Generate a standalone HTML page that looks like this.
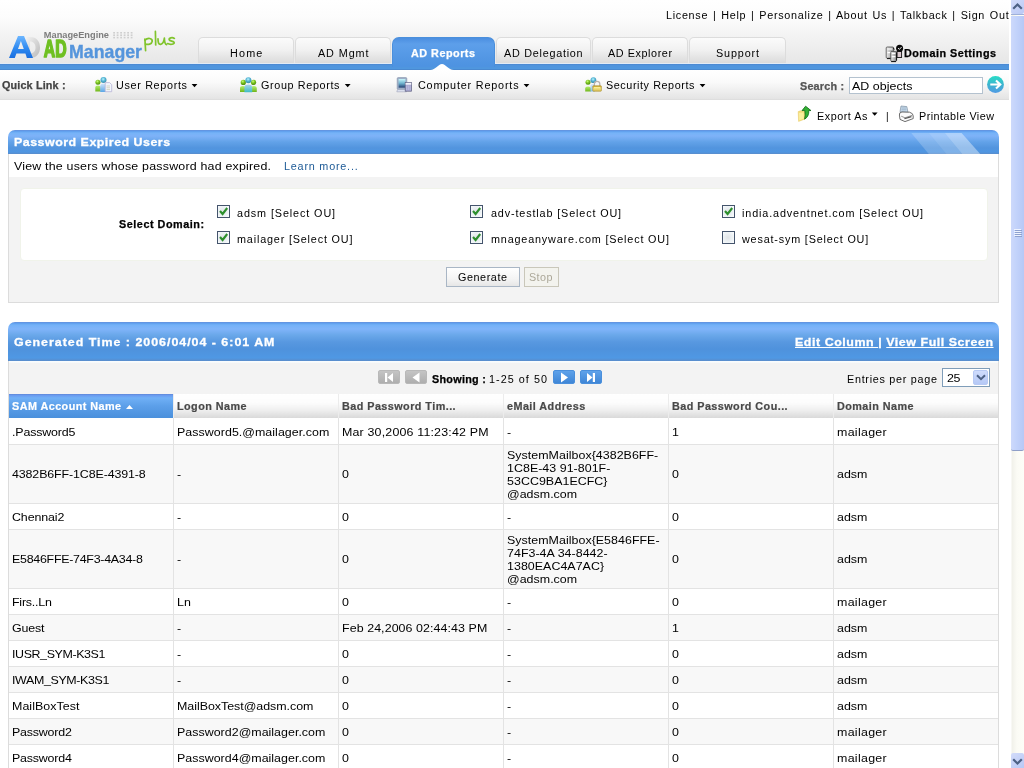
<!DOCTYPE html>
<html>
<head>
<meta charset="utf-8">
<title>ADManager Plus - Password Expired Users</title>
<style>
*{box-sizing:border-box;margin:0;padding:0}
html,body{width:1024px;height:768px;overflow:hidden;background:#fff}
body{font-family:"Liberation Sans",sans-serif;font-size:10px;color:#000;position:relative}
.abs{position:absolute;white-space:nowrap}
#page{will-change:transform;position:absolute;left:0;top:0;width:1009px;height:768px;overflow:hidden;background:#fff}
/* header */
#hdr{position:absolute;left:0;top:0;width:1009px;height:63px;background:linear-gradient(#fff 0,#fcfcfc 18px,#f3f3f3 36px,#e7e7e7 63px)}
#bluebar{position:absolute;left:0;top:64px;width:1009px;height:6px;background:linear-gradient(#4a86cf 0,#4f93dc 1.5px,#4f97df 4.5px,#4682c8 6px)}
#qbar{position:absolute;left:0;top:70px;width:1009px;height:30px;background:linear-gradient(#fff 0,#fafafa 12px,#e4e4e4 29px,#d8d8d8 30px)}
.tab{position:absolute;top:37px;height:26px;border:1px solid #dcdcdc;border-bottom:none;border-radius:5px 5px 0 0;background:linear-gradient(#fbfbfb 0,#f1f1f1 12px,#d9d9d9 26px)}
.tab.sel{background:linear-gradient(#4b8ee0 0,#5d9fea 6px,#4e93e1 27px);border-color:#4a8fdc;height:30px;border-radius:7px 7px 0 0}
.t10{font-size:10px;letter-spacing:.75px}
.t11{font-size:11.5px;letter-spacing:.55px}
.b{font-weight:bold;-webkit-text-stroke:.25px currentColor}
.t11.b{-webkit-text-stroke:.3px #fff}
#grid th{-webkit-text-stroke:.2px currentColor}
.m{display:inline-block;transform:scaleX(1.08);transform-origin:0 50%}
/* panels */
.phead{position:absolute;left:8px;width:991px;border-radius:7px 7px 0 0;background:linear-gradient(#6a8ed8 0,#5c9cec 1px,#76b3f8 3px,#7eb2f8 6px,#62a2e8 12px,#5294de 18px,#4f96e2 22px,#5a8cca 24px)}
.pbody{position:absolute;left:8px;width:991px;border:1px solid #dcdcdc;border-top:none;background:#f3f3f3}
.cb{position:absolute;width:13px;height:13px;border:1px solid #44546c;background:radial-gradient(circle at 45% 50%,#dfe3e6 0,#eef3f6 60%,#fdfefe 100%)}
.btn{position:absolute;height:20px;border:1px solid #a9b6c5;background:linear-gradient(#fff,#f4f4f4 60%,#e6e6e6);text-align:center}
.pg{width:22px;height:14px;border-radius:2px;background:linear-gradient(#5fa2ea,#3f86d6);border:1px solid #4a8fdc}
.pg.g{background:linear-gradient(#c4c4c4,#aeaeae);border-color:#b8b8b8}
/* table */
#grid{position:absolute;left:8px;top:394px;width:991px;border-collapse:collapse;table-layout:fixed}
#grid th{height:24px;text-align:left;font-size:10px;letter-spacing:.42px;color:#484848;padding:0 0 0 4px;background:linear-gradient(#fff 0,#fcfcfc 9px,#efefef 16px,#d9d9d9 24px);border-left:1px solid #ececec;white-space:nowrap;overflow:hidden}
#grid th.s{color:#fff;background:linear-gradient(#5f86d6 0,#6a9cf0 1.5px,#70b0f6 4px,#5c9fe9 12px,#4a90dc 24px);border-left:none}
#grid td{height:26px;font-size:11.5px;letter-spacing:.03px;line-height:13px;padding:4px 0 2px 4px;border-left:1px solid #e3e3e3;border-bottom:1px solid #e3e3e3;vertical-align:middle;background:#fff}
#grid tr.a td{background:#f8f8f8}
#grid tr.r1 td{padding-top:6px}
#grid td:first-child,#grid th:first-child{border-left:none}
#grid td+td,#grid th+th{padding-left:3px}
</style>
</head>
<body>
<div id="page">
<div id="hdr"></div>
<div class="abs" style="left:0;top:63px;width:1009px;height:1px;background:#e2ebf5"></div>
<div id="bluebar"></div>
<div id="qbar"></div>

<!-- top links -->
<span class="abs t10 m" id="toplinks" style="left:666.2px;top:9px;line-height:13px;word-spacing:1px;letter-spacing:0.65px">License | Help | Personalize | About Us | Talkback | Sign Out</span>

<!-- logo -->
<svg class="abs" style="left:6px;top:28px" width="172" height="36" viewBox="0 0 172 36">
  <defs>
    <linearGradient id="lgA" x1="0" y1="0" x2="0" y2="1"><stop offset="0" stop-color="#6db6ff"/><stop offset=".55" stop-color="#2f8af0"/><stop offset="1" stop-color="#1a6fe0"/></linearGradient>
    <linearGradient id="lgD" x1="0" y1="0" x2="1" y2="1"><stop offset="0" stop-color="#f2f2f2"/><stop offset="1" stop-color="#b9b9b9"/></linearGradient>
  </defs>
  <!-- D (gray) -->
  <path d="M20 9 H24 C31 9 34 14 34 19.5 C34 25 31 30 24 30 H20 Z M24 13.5 V25.5 C27.5 25.5 29.5 23 29.5 19.5 C29.5 16 27.5 13.5 24 13.5 Z" fill="url(#lgD)" fill-rule="evenodd"/>
  <!-- A (blue) -->
  <path d="M3 30 L12 8 H18 L27 30 H21 L19.4 25.5 H10.4 L8.8 30 Z M12 21 H17.8 L14.9 13 Z" fill="url(#lgA)" fill-rule="evenodd"/>
  <text x="37.8" y="10.2" font-family="Liberation Sans, sans-serif" font-weight="bold" font-size="9.2" fill="#7d7d7d" textLength="65.2" lengthAdjust="spacingAndGlyphs">ManageEngine</text>
  <g fill="#cfcfcf"><rect x="107.2" y="4" width="1.8" height="1.6"/><rect x="107.2" y="6.4" width="1.8" height="1.6"/><rect x="107.2" y="8.8" width="1.8" height="1.6"/><rect x="110.7" y="4" width="1.8" height="1.6"/><rect x="110.7" y="6.4" width="1.8" height="1.6"/><rect x="110.7" y="8.8" width="1.8" height="1.6"/><rect x="114.2" y="4" width="1.8" height="1.6"/><rect x="114.2" y="6.4" width="1.8" height="1.6"/><rect x="114.2" y="8.8" width="1.8" height="1.6"/><rect x="117.7" y="4" width="1.8" height="1.6"/><rect x="117.7" y="6.4" width="1.8" height="1.6"/><rect x="117.7" y="8.8" width="1.8" height="1.6"/><rect x="121.2" y="4" width="1.8" height="1.6"/><rect x="121.2" y="6.4" width="1.8" height="1.6"/><rect x="121.2" y="8.8" width="1.8" height="1.6"/><rect x="124.7" y="4" width="1.8" height="1.6"/><rect x="124.7" y="6.4" width="1.8" height="1.6"/><rect x="124.7" y="8.8" width="1.8" height="1.6"/></g>
  <text x="37.8" y="29.3" font-family="Liberation Sans, sans-serif" font-weight="bold" font-size="23.6" fill="#6fc022" stroke="#6fc022" stroke-width="1.7" stroke-linejoin="round" textLength="22.8" lengthAdjust="spacingAndGlyphs">AD</text>
  <text x="63.1" y="29.9" font-family="Liberation Sans, sans-serif" font-weight="bold" font-size="17.8" fill="#5595dc" stroke="#5595dc" stroke-width=".35" textLength="72.9" lengthAdjust="spacingAndGlyphs">Manager</text>
  <g fill="none" stroke="#80c42c" stroke-width="1.7" stroke-linecap="round" stroke-linejoin="round">
    <path d="M138.9 11 L139.6 22.6"/><path d="M139 12.2 C141.6 9.4 146.6 10 146.2 13.4 C145.8 16.2 142 17 139.5 16"/>
    <path d="M149.4 3.4 L149.7 17"/>
    <path d="M152 10.8 C152 14 152.4 16.6 154.6 16.4 C156.8 16.2 158 13 158.4 10.2 C158.4 13 158.8 16 160.6 16.6"/>
    <path d="M168.4 10.4 C166 9 162.8 10 163.2 11.8 C163.6 13.6 167.8 12.8 168.2 14.6 C168.5 16.2 164.4 17 161.6 15.6"/>
  </g>
</svg>

<!-- tabs -->
<div class="tab" style="left:198px;width:96px"></div>
<div class="tab" style="left:295px;width:96px"></div>
<div class="tab sel" style="left:392px;width:103px"></div>
<div class="tab" style="left:496px;width:95px"></div>
<div class="tab" style="left:592px;width:96px"></div>
<div class="tab" style="left:689px;width:97px"></div>
<svg class="abs" style="left:430px;top:63px" width="24" height="7" viewBox="0 0 24 7"><path d="M0 7 C6 7 8 1 12 1 C16 1 18 7 24 7 Z" fill="#fff"/></svg>
<span class="abs t10 m" style="left:230px;top:47px;line-height:13px;letter-spacing:1.1px">Home</span>
<span class="abs t10 m" style="left:317.7px;top:47px;line-height:13px;letter-spacing:0.85px">AD Mgmt</span>
<span class="abs t10 b m" style="left:410.7px;top:47px;line-height:13px;color:#fff;letter-spacing:0.47px">AD Reports</span>
<span class="abs t10 m" style="left:503.7px;top:47px;line-height:13px;letter-spacing:0.69px">AD Delegation</span>
<span class="abs t10 m" style="left:607.7px;top:47px;line-height:13px;letter-spacing:0.54px">AD Explorer</span>
<span class="abs t10 m" style="left:716.2px;top:47px;line-height:13px;letter-spacing:0.8px">Support</span>
<span class="abs t10 b m" style="left:903.7px;top:47px;line-height:13px;letter-spacing:0.45px">Domain Settings</span>

<!-- quick links -->
<span class="abs t10 b m" style="left:1.7px;top:79px;line-height:13px;color:#444;letter-spacing:0.14px">Quick Link :</span>
<span class="abs t10 m" style="left:116.2px;top:79px;line-height:13px;letter-spacing:0.62px">User Reports</span>
<span class="abs t10 m" style="left:261.2px;top:79px;line-height:13px;letter-spacing:0.59px">Group Reports</span>
<span class="abs t10 m" style="left:418.2px;top:79px;line-height:13px;letter-spacing:0.76px">Computer Reports</span>
<span class="abs t10 m" style="left:606.2px;top:79px;line-height:13px;letter-spacing:0.53px">Security Reports</span>
<span class="abs t10 b m" style="left:799.7px;top:80px;line-height:13px;color:#555;letter-spacing:0.18px">Search :</span>
<div class="abs" style="left:849px;top:77px;width:134px;height:17px;border:1px solid #b4c2cf;background:#fff"></div>
<span class="abs t11 m" style="left:851.7px;top:80px;line-height:13px;letter-spacing:0.05px">AD objects</span>

<!-- export row -->
<span class="abs t10 m" style="left:816.7px;top:110px;line-height:13px;letter-spacing:0.49px">Export As</span>
<span class="abs t10" style="left:886px;top:110px;line-height:13px">|</span>
<span class="abs t10 m" style="left:918.7px;top:110px;line-height:13px;letter-spacing:0.44px">Printable View</span>

<!-- icons -->
<svg class="abs" style="left:0;top:0" width="1009" height="130" viewBox="0 0 1009 130">
<defs>
  <radialGradient id="gG" cx=".4" cy=".3" r=".7"><stop offset="0" stop-color="#c6ff7a"/><stop offset=".5" stop-color="#78bf1c"/><stop offset="1" stop-color="#4f8f0e"/></radialGradient>
  <radialGradient id="gT" cx=".45" cy=".35" r=".7"><stop offset="0" stop-color="#b8f4ff"/><stop offset=".5" stop-color="#4fb0d0"/><stop offset="1" stop-color="#3a8aa6"/></radialGradient>
  <linearGradient id="gGb" x1="0" y1="0" x2="0" y2="1"><stop offset="0" stop-color="#b6f070"/><stop offset="1" stop-color="#6fb51a"/></linearGradient>
  <linearGradient id="gBb" x1="0" y1="0" x2="0" y2="1"><stop offset="0" stop-color="#cfe6fb"/><stop offset="1" stop-color="#5aa6e6"/></linearGradient>
  <linearGradient id="gTb" x1="0" y1="0" x2="0" y2="1"><stop offset="0" stop-color="#a9d4ee"/><stop offset="1" stop-color="#3dbcc4"/></linearGradient>
  <linearGradient id="gScr" x1="0" y1="0" x2="0" y2="1"><stop offset="0" stop-color="#c8f6fb"/><stop offset=".5" stop-color="#6fb4cf"/><stop offset="1" stop-color="#253f72"/></linearGradient>
  <linearGradient id="gGo" x1="0" y1="0" x2="0" y2="1"><stop offset="0" stop-color="#27dcc6"/><stop offset=".5" stop-color="#3db4cf"/><stop offset="1" stop-color="#519be4"/></linearGradient>
  <linearGradient id="gLk" x1="0" y1="0" x2="0" y2="1"><stop offset="0" stop-color="#c8a527"/><stop offset=".45" stop-color="#f1df7a"/><stop offset="1" stop-color="#d9c25a"/></linearGradient>
  <linearGradient id="gSv" x1="0" y1="0" x2="1" y2="0"><stop offset="0" stop-color="#ececec"/><stop offset="1" stop-color="#8e8e8e"/></linearGradient>
</defs>
<!-- user reports -->
<g>
  <path d="M95.3 91.6 V87.6 Q95.3 85.4 98 85.4 Q100.7 85.4 100.7 87.6 V91.6 Z" fill="url(#gGb)"/>
  <circle cx="97.9" cy="82.3" r="2.5" fill="url(#gG)"/>
  <path d="M100.2 92 V86.6 Q100.2 83.6 103.2 83.6 Q106 83.6 106 86.6 V92 Z" fill="url(#gBb)"/>
  <circle cx="103.5" cy="80.1" r="3" fill="url(#gT)"/>
  <path d="M105.2 82.6 H109.6 L111.7 84.7 V91.7 H105.2 Z" fill="#f1f6fc" stroke="#b7b2d6" stroke-width=".8"/>
  <path d="M106.5 86 H110 M106.5 87.8 H110 M106.5 89.6 H110" stroke="#c9c4a8" stroke-width=".7"/>
</g>
<!-- group reports -->
<g>
  <path d="M240 92 V88.4 Q240 86 243 86 Q245.8 86 245.8 88.4 V92 Z" fill="url(#gGb)"/>
  <path d="M251 92 V88.4 Q251 86 253.8 86 Q256.8 86 256.8 88.4 V92 Z" fill="url(#gGb)"/>
  <circle cx="243.3" cy="82.4" r="2.6" fill="url(#gG)"/>
  <circle cx="253.6" cy="82.4" r="2.6" fill="url(#gG)"/>
  <path d="M244.4 92.2 V87.6 Q244.4 84.6 248.3 84.6 Q252.2 84.6 252.2 87.6 V92.2 Z" fill="url(#gTb)"/>
  <circle cx="248.4" cy="80.2" r="3" fill="url(#gT)"/>
</g>
<!-- computer reports -->
<g>
  <rect x="397.2" y="77.6" width="9.6" height="11.8" rx="1" fill="#9fb0c8" stroke="#7f8ea8" stroke-width=".6"/>
  <rect x="398.6" y="79" width="6.8" height="8.6" fill="url(#gScr)"/>
  <path d="M397.5 89.6 H405.5 L406.5 91.8 H396.8 Z" fill="#dfe3f2" stroke="#8c93ad" stroke-width=".5"/>
  <rect x="405.2" y="82.6" width="6.4" height="8.6" fill="#a9a9d2" stroke="#5f6080" stroke-width=".7"/>
  <rect x="405.6" y="82.9" width="5.6" height="1.8" fill="#f4f4fb"/>
  <path d="M406.6 85.6 V90 M408.4 85.6 V90 M410.2 85.6 V90" stroke="#c4c4e4" stroke-width=".6"/>
</g>
<!-- security reports -->
<g>
  <path d="M585.2 91.6 V88.4 Q585.2 86.4 588 86.4 Q590.8 86.4 590.8 88.4 V91.6 Z" fill="url(#gGb)"/>
  <circle cx="588" cy="82.3" r="2.5" fill="url(#gG)"/>
  <path d="M590.4 91.6 V86.4 Q590.4 83.8 593.2 83.8 Q595 83.8 595 86 V91.6 Z" fill="url(#gBb)" fill-opacity=".7"/>
  <circle cx="593.4" cy="80.2" r="2.9" fill="url(#gT)"/>
  <path d="M594.4 86 V83.8 Q594.4 81.4 597 81.4 Q599.8 81.4 599.8 83.8 V86" fill="none" stroke="#b8b2ae" stroke-width="1.3"/>
  <rect x="592.8" y="85.8" width="8.6" height="5.4" rx=".6" fill="url(#gLk)" stroke="#a88c2a" stroke-width=".6"/>
  <path d="M594 87.6 H600.2" stroke="#fff3a0" stroke-width=".9"/>
</g>
<!-- domain settings -->
<g>
  <rect x="886.2" y="47" width="7.4" height="11.2" rx="1" fill="url(#gSv)" stroke="#5e5e5e" stroke-width=".9"/>
  <path d="M887.4 49 H892.4 M887.4 52.6 H892.4" stroke="#fff" stroke-width="1.2"/>
  <path d="M887 58.6 H893" stroke="#111" stroke-width="1"/>
  <rect x="897" y="51.5" width="4.6" height="6" fill="#d9c9cf" stroke="#111" stroke-width=".9"/>
  <circle cx="899.6" cy="48.2" r="3.5" fill="#0a0a0a"/>
  <path d="M898 48 L899.4 49.4 L901.6 47" fill="none" stroke="#fff" stroke-width=".9"/>
  <rect x="890.8" y="51.4" width="5.6" height="10" rx="1" fill="url(#gSv)" stroke="#4e4e4e" stroke-width=".9"/>
  <path d="M891.8 53.4 H895.4 M891.8 56.6 H895.4" stroke="#fff" stroke-width="1.1"/>
  <path d="M891.2 61.6 H896 M896.6 52.4 V60.6" stroke="#111" stroke-width="1"/>
  <path d="M893.4 47.8 L894.2 49.6" stroke="#111" stroke-width="1"/>
</g>
<!-- search go -->
<circle cx="995.5" cy="84.5" r="8.4" fill="url(#gGo)"/>
<path d="M990.3 84.5 H999.6 M996 80.4 L1000.3 84.5 L996 88.6" fill="none" stroke="#fff" stroke-width="2.1"/>
<!-- export -->
<g>
  <path d="M798.2 111.6 L800.4 110.8 L805 111.2 V119 L798.6 121.4 Z" fill="#f6dd7c" stroke="#e5c863" stroke-width=".5"/>
  <path d="M799 113 L803.6 112.6 L803.8 118.6 L799.2 120.4 Z" fill="#fbef9d"/>
  <path d="M802 110.6 L805.6 106.2 L811 110.6 L808.8 110.4 Q809.2 116.4 804.6 119.2 Q805.6 115.4 804.8 110.4 Z" fill="#34b034" stroke="#0d6a12" stroke-width=".8" stroke-linejoin="round"/>
</g>
<!-- printer -->
<g>
  <path d="M900 111.8 L901 106 L906.8 106.6 L908 112.4 Z" fill="#c9dcec" stroke="#6d7f92" stroke-width=".6"/>
  <path d="M901.6 108 H906 M901.4 109.8 H906.4" stroke="#8ba4bb" stroke-width=".7"/>
  <path d="M899.4 115 Q899 112.2 902 112 L909.6 112.2 Q913.4 113.4 913.2 116 V118.6 L905 121.6 L900 119.4 Z" fill="#fbfbfb" stroke="#4a4a4a" stroke-width=".8" stroke-linejoin="round"/>
  <path d="M901.2 116.2 L905 117.8 L912 115.4" fill="none" stroke="#8a8a8a" stroke-width=".9"/>
  <path d="M904.4 118.8 L911.4 116.6" stroke="#555" stroke-width="1.2"/>
</g>
<!-- dropdown arrows -->
<g fill="#000"><path d="M191.6 84 H197.4 L194.5 87.2 Z"/><path d="M344.8 84 H350.6 L347.7 87.2 Z"/><path d="M523.6 84 H529.4 L526.5 87.2 Z"/><path d="M699.6 84 H705.4 L702.5 87.2 Z"/><path d="M871.8 112.6 H877.6 L874.7 115.8 Z"/></g>
</svg>

<!-- panel 1 -->
<div class="phead" style="top:130px;height:24px;overflow:hidden">
  <svg class="abs" style="left:900px;top:0" width="76" height="24" viewBox="0 0 76 24"><g fill="#fff"><path d="M3.3 3 H20.8 L38.3 24 H20.8 Z" fill-opacity=".2"/><path d="M20.8 3 H36.7 L54.2 24 H38.3 Z" fill-opacity=".27"/><path d="M36.7 3 H53.6 L72.2 24 H54.2 Z" fill-opacity=".4"/></g></svg>
</div>
<span class="abs t11 b m" style="left:14.2px;top:136px;line-height:13px;color:#fff;letter-spacing:0.46px">Password Expired Users</span>
<div class="pbody" style="top:154px;height:149px"></div>
<div class="abs" style="left:9px;top:154px;width:989px;height:23px;background:#fff"></div>
<span class="abs t11 m" style="left:14.2px;top:160px;line-height:13px;letter-spacing:0.18px">View the users whose password had expired.</span>
<span class="abs t10 m" style="left:284.4px;top:160px;line-height:13px;color:#1d5a96;letter-spacing:0.73px">Learn more...</span>
<div class="abs" style="left:20px;top:188px;width:968px;height:73px;background:#fff;border:1px solid #f0f3ea;border-radius:4px"></div>
<span class="abs t10 b m" style="left:119.2px;top:218px;line-height:13px;letter-spacing:0.5px">Select Domain:</span>

<div class="cb" style="left:217px;top:205px"></div>
<div class="cb" style="left:217px;top:231px"></div>
<div class="cb" style="left:470px;top:205px"></div>
<div class="cb" style="left:470px;top:231px"></div>
<div class="cb" style="left:722px;top:205px"></div>
<div class="cb" style="left:722px;top:231px"></div>
<svg class="abs" style="left:0;top:0;pointer-events:none" width="1009" height="300" viewBox="0 0 1009 300"><g fill="none" stroke="#2d8f2d" stroke-width="2.1">
<path d="M220 211 l2.6 3 l4.6 -6"/><path d="M220 237 l2.6 3 l4.6 -6"/>
<path d="M473 211 l2.6 3 l4.6 -6"/><path d="M473 237 l2.6 3 l4.6 -6"/>
<path d="M725 211 l2.6 3 l4.6 -6"/></g></svg>
<span class="abs t10 m" style="left:237.2px;top:207px;line-height:13px;letter-spacing:0.83px">adsm [Select OU]</span>
<span class="abs t10 m" style="left:237.2px;top:233px;line-height:13px;letter-spacing:0.77px">mailager [Select OU]</span>
<span class="abs t10 m" style="left:490.7px;top:207px;line-height:13px;letter-spacing:0.8px">adv-testlab [Select OU]</span>
<span class="abs t10 m" style="left:490.7px;top:233px;line-height:13px;letter-spacing:0.77px">mnageanyware.com [Select OU]</span>
<span class="abs t10 m" style="left:742.2px;top:207px;line-height:13px;letter-spacing:0.81px">india.adventnet.com [Select OU]</span>
<span class="abs t10 m" style="left:742.2px;top:233px;line-height:13px;letter-spacing:0.76px">wesat-sym [Select OU]</span>

<div class="btn" style="left:446px;top:267px;width:74px"></div>
<div class="btn" style="left:524px;top:267px;width:35px;border-color:#c9c7ba;background:#f3f3ee"></div>
<span class="abs t10 m" style="left:457.7px;top:271px;line-height:13px;letter-spacing:0.52px">Generate</span>
<span class="abs t10 m" style="left:529.2px;top:271px;line-height:13px;color:#aca899;letter-spacing:0.39px">Stop</span>

<!-- panel 2 -->
<div class="phead" style="top:322px;height:39px;background:linear-gradient(#6a8ed8 0,#5c9cec 1px,#74b2f8 3px,#80b4fa 7px,#6aa8ea 13px,#5898e0 20px,#4f92dc 27px,#4f98e4 36px,#5a8cca 39px)"></div>
<span class="abs t11 b m" style="left:14.2px;top:336px;line-height:13px;color:#fff;letter-spacing:0.91px">Generated Time : 2006/04/04 - 6:01 AM</span>
<span class="abs t11 b m" style="left:794.7px;top:336px;line-height:13px;color:#fff;letter-spacing:0.51px"><u>Edit Column </u>| <u>View Full Screen</u></span>
<div class="pbody" style="top:361px;height:420px"></div>

<div class="abs" style="left:9px;top:361px;width:989px;height:2px;background:linear-gradient(#fafdfe,#f6f8f9)"></div>
<!-- pagination -->
<div class="abs pg g" style="left:378px;top:370px"></div>
<div class="abs pg g" style="left:405px;top:370px"></div>
<div class="abs pg" style="left:553px;top:370px"></div>
<div class="abs pg" style="left:580px;top:370px"></div>
<svg class="abs" style="left:370px;top:366px" width="240" height="22" viewBox="0 0 240 22"><g fill="#fff">
<rect x="15" y="7" width="2.2" height="9"/><path d="M23 7 V16 L17.5 11.5 Z"/>
<path d="M49.5 6.5 V16.5 L42.5 11.5 Z"/>
<path d="M191 6.5 V16.5 L198 11.5 Z"/>
<path d="M217 7 V16 L222.5 11.5 Z"/><rect x="222.8" y="7" width="2.2" height="9"/></g></svg>
<span class="abs t10 b m" style="left:432.2px;top:373px;line-height:13px;letter-spacing:0.25px">Showing :</span>
<span class="abs t10 m" style="left:489.2px;top:373px;line-height:13px;letter-spacing:0.96px">1-25 of 50</span>
<span class="abs t10 m" style="left:847.2px;top:373px;line-height:13px;letter-spacing:0.66px">Entries per page</span>
<div class="abs" style="left:942px;top:368px;width:48px;height:19px;border:1px solid #7f9db9;background:#fff"></div>
<div class="abs" style="left:973px;top:370px;width:15px;height:15px;border-radius:2px;background:linear-gradient(#cfdcfc,#b5c8f6);border:1px solid #b7c9f4"></div>
<svg class="abs" style="left:976px;top:374px" width="10" height="8" viewBox="0 0 10 8"><path d="M1 1.2 L5 5.2 L9 1.2" fill="none" stroke="#4d6185" stroke-width="2"/></svg>
<span class="abs t11 m" style="left:947.2px;top:372px;line-height:13px;letter-spacing:-0.3px">25</span>

<!-- grid -->
<table id="grid" cellspacing="0">
<colgroup><col style="width:165px"><col style="width:165px"><col style="width:165px"><col style="width:165px"><col style="width:165px"><col style="width:166px"></colgroup>
<tr><th class="s"><span class="m">SAM Account Name</span><svg width="7" height="4" viewBox="0 0 7 4" style="margin-left:13px;margin-bottom:1px"><path d="M0 4 L3.5 0 L7 4 Z" fill="#fff"/></svg></th><th><span class="m">Logon Name</span></th><th><span class="m">Bad Password Tim...</span></th><th><span class="m">eMail Address</span></th><th><span class="m">Bad Password Cou...</span></th><th><span class="m">Domain Name</span></th></tr>
<tr class="r1"><td><span class="m" style="letter-spacing:-0.15px">.Password5</span></td><td><span class="m" style="letter-spacing:0.04px">Password5.@mailager.com</span></td><td><span class="m" style="letter-spacing:0.16px">Mar 30,2006 11:23:42 PM</span></td><td><span class="m">-</span></td><td><span class="m">1</span></td><td><span class="m" style="letter-spacing:0.27px">mailager</span></td></tr>
<tr class="a"><td><span class="m" style="letter-spacing:-0.11px">4382B6FF-1C8E-4391-8</span></td><td><span class="m">-</span></td><td><span class="m">0</span></td><td><span class="m">SystemMailbox{4382B6FF-<br>1C8E-43 91-801F-<br>53CC9BA1ECFC}<br>@adsm.com</span></td><td><span class="m">0</span></td><td><span class="m" style="letter-spacing:0.01px">adsm</span></td></tr>
<tr><td><span class="m" style="letter-spacing:-0.1px">Chennai2</span></td><td><span class="m">-</span></td><td><span class="m">0</span></td><td><span class="m">-</span></td><td><span class="m">0</span></td><td><span class="m" style="letter-spacing:0.01px">adsm</span></td></tr>
<tr class="a"><td><span class="m" style="letter-spacing:-0.25px">E5846FFE-74F3-4A34-8</span></td><td><span class="m">-</span></td><td><span class="m">0</span></td><td><span class="m">SystemMailbox{E5846FFE-<br>74F3-4A 34-8442-<br>1380EAC4A7AC}<br>@adsm.com</span></td><td><span class="m">0</span></td><td><span class="m" style="letter-spacing:0.01px">adsm</span></td></tr>
<tr><td><span class="m" style="letter-spacing:-0.2px">Firs..Ln</span></td><td><span class="m">Ln</span></td><td><span class="m">0</span></td><td><span class="m">-</span></td><td><span class="m">0</span></td><td><span class="m" style="letter-spacing:0.27px">mailager</span></td></tr>
<tr class="a"><td><span class="m" style="letter-spacing:-0.17px">Guest</span></td><td><span class="m">-</span></td><td><span class="m" style="letter-spacing:0.07px">Feb 24,2006 02:44:43 PM</span></td><td><span class="m">-</span></td><td><span class="m">1</span></td><td><span class="m" style="letter-spacing:0.01px">adsm</span></td></tr>
<tr><td><span class="m" style="letter-spacing:-0.36px">IUSR_SYM-K3S1</span></td><td><span class="m">-</span></td><td><span class="m">0</span></td><td><span class="m">-</span></td><td><span class="m">0</span></td><td><span class="m" style="letter-spacing:0.01px">adsm</span></td></tr>
<tr class="a"><td><span class="m" style="letter-spacing:-0.33px">IWAM_SYM-K3S1</span></td><td><span class="m">-</span></td><td><span class="m">0</span></td><td><span class="m">-</span></td><td><span class="m">0</span></td><td><span class="m" style="letter-spacing:0.01px">adsm</span></td></tr>
<tr><td><span class="m" style="letter-spacing:0.04px">MailBoxTest</span></td><td><span class="m" style="letter-spacing:-0.02px">MailBoxTest@adsm.com</span></td><td><span class="m">0</span></td><td><span class="m">-</span></td><td><span class="m">0</span></td><td><span class="m" style="letter-spacing:0.01px">adsm</span></td></tr>
<tr class="a"><td><span class="m" style="letter-spacing:-0.18px">Password2</span></td><td><span class="m" style="letter-spacing:0.02px">Password2@mailager.com</span></td><td><span class="m">0</span></td><td><span class="m">-</span></td><td><span class="m">0</span></td><td><span class="m" style="letter-spacing:0.27px">mailager</span></td></tr>
<tr><td><span class="m" style="letter-spacing:-0.18px">Password4</span></td><td><span class="m" style="letter-spacing:0.02px">Password4@mailager.com</span></td><td><span class="m">0</span></td><td><span class="m">-</span></td><td><span class="m">0</span></td><td><span class="m" style="letter-spacing:0.27px">mailager</span></td></tr>
</table>
<div class="abs" style="left:8px;top:394px;width:1px;height:374px;background:#dcdcdc"></div>
<div class="abs" style="left:998px;top:394px;width:1px;height:374px;background:#dcdcdc"></div>
</div>

<!-- scrollbar -->
<div id="sb" style="position:absolute;left:1009px;top:0;width:15px;height:768px;background:linear-gradient(90deg,#fff 0,#fff 2px,#f1f1ea 3px,#fbfbf5 8px,#fdfdf8 15px)">
  <div style="position:absolute;left:2px;top:0;width:13px;height:14px;background:linear-gradient(135deg,#d3dcfa,#b9c8f5);border-radius:0 0 2px 2px"></div>
  <svg style="position:absolute;left:3px;top:2px" width="11" height="8" viewBox="0 0 11 8"><path d="M1.2 6.8 L5.5 2.5 L9.8 6.8" fill="none" stroke="#4d6185" stroke-width="2.2"/></svg>
  <div style="position:absolute;left:2px;top:16px;width:13px;height:435px;background:linear-gradient(90deg,#cdd9fb 0,#c3d3fb 5px,#b7c8f6 13px);border-bottom:1px solid #8f9fc8;border-radius:0 0 2px 2px"></div>
  <div style="position:absolute;left:2px;top:14px;width:13px;height:1px;background:#9fb0d8"></div>
  <svg style="position:absolute;left:5px;top:229px" width="8" height="9" viewBox="0 0 8 9"><g stroke="#eef3ff" stroke-width="1"><path d="M0 .5H7M0 2.5H7M0 4.5H7M0 6.5H7"/></g><g stroke="#8ea1d0" stroke-width="1"><path d="M1 1.5H8M1 3.5H8M1 5.5H8M1 7.5H8"/></g></svg>
  <div style="position:absolute;left:2px;top:753px;width:13px;height:15px;background:linear-gradient(135deg,#d3dcfa,#b9c8f5);border-radius:2px 2px 0 0"></div>
  <svg style="position:absolute;left:3px;top:758px" width="11" height="8" viewBox="0 0 11 8"><path d="M1.2 1.2 L5.5 5.5 L9.8 1.2" fill="none" stroke="#4d6185" stroke-width="2.2"/></svg>
</div>
</body>
</html>
